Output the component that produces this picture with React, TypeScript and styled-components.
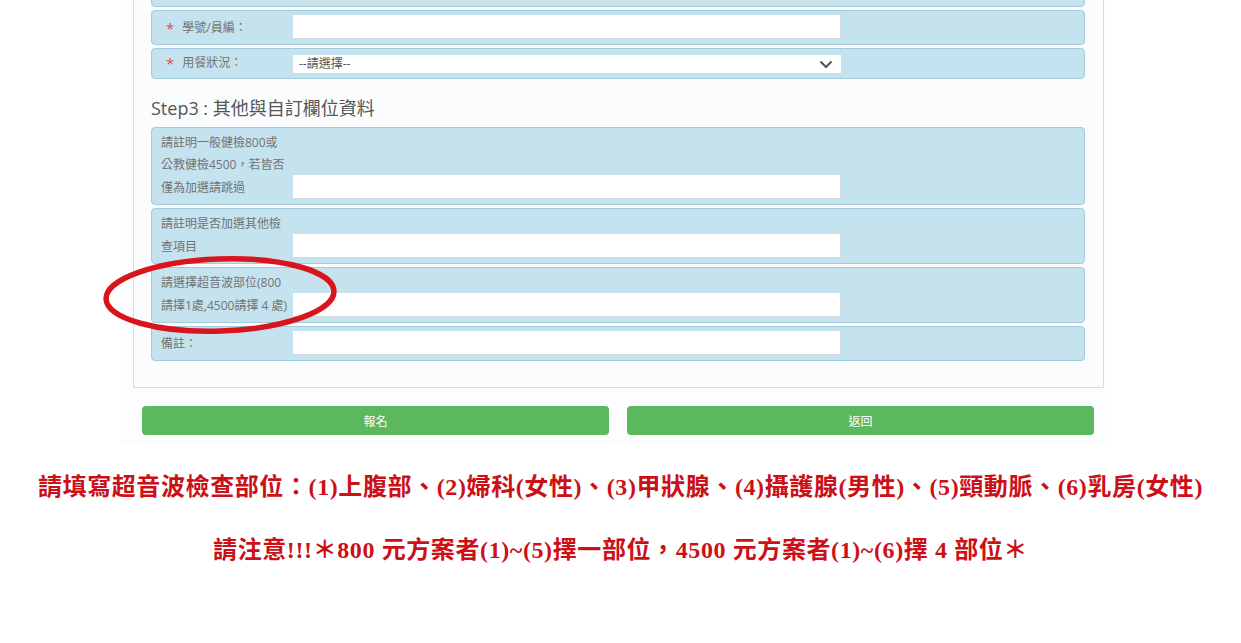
import React from 'react';
import styled, { createGlobalStyle } from 'styled-components';

const GlobalStyle = createGlobalStyle`
    body {
        margin: 0;
        background: #ffffff;
        font-family: "Open Sans", "Noto Sans CJK TC", sans-serif;
    }
`;

interface IField {
    label: string[];
    required?: boolean;
    select?: boolean;
}

// the first row of step 2 is scrolled off the top; only its lower edge shows
const stepTwo: IField[] = [
    { label: [] },
    { label: ['學號/員編：'], required: true },
    { label: ['用餐狀況：'], required: true, select: true },
];

const stepThree: IField[] = [
    { label: ['請註明一般健檢800或', '公教健檢4500，若皆否', '僅為加選請跳過'] },
    { label: ['請註明是否加選其他檢', '查項目'] },
    { label: ['請選擇超音波部位(800', '請擇1處,4500請擇 4 處)'] },
    { label: ['備註：'] },
];

const FieldRow = ({ label, required, select }: IField) => (
    <Row $compact={select}>
        <Label>
            {required && <Star>*</Star>}
            <LabelText>
                {label.map(line => (
                    <span key={line}>{line}</span>
                ))}
            </LabelText>
        </Label>
        {select ? (
            <SelectWrap>
                <Select defaultValue="">
                    <option value="">--請選擇--</option>
                </Select>
                <Chevron width="14" height="9" viewBox="0 0 14 9">
                    <polyline points="1.5,1.5 7,7 12.5,1.5" />
                </Chevron>
            </SelectWrap>
        ) : (
            <Input type="text" />
        )}
    </Row>
);

const App = () => {
    return (
        <Page>
            <GlobalStyle />
            <FormArea>
                <Panel>
                    {stepTwo.map((f, i) => (
                        <FieldRow key={i} {...f} />
                    ))}
                    <StepTitle>Step3 : 其他與自訂欄位資料</StepTitle>
                    {stepThree.map(f => (
                        <FieldRow key={f.label[0]} {...f} />
                    ))}
                </Panel>
                <ButtonBar>
                    <Button type="button">報名</Button>
                    <Button type="button">返回</Button>
                </ButtonBar>
            </FormArea>
            <Notice>
                <p>請填寫超音波檢查部位：(1)上腹部、(2)婦科(女性)、(3)甲狀腺、(4)攝護腺(男性)、(5)頸動脈、(6)乳房(女性)</p>
                <p>請注意!!!＊800 元方案者(1)~(5)擇一部位，4500 元方案者(1)~(6)擇 4 部位＊</p>
            </Notice>
            <Circle width="244" height="88" viewBox="0 0 244 88">
                <ellipse cx="122" cy="44" rx="114" ry="36" transform="rotate(-2 122 44)" />
            </Circle>
        </Page>
    );
};

const Page = styled.div`
    display: flow-root;
    position: relative;
    min-height: 643px;
`;

const FormArea = styled.div`
    width: 990px;
    margin: -39px 0 0 120px;
    background: #fcfdfe;
`;

const Panel = styled.div`
    width: 971px;
    margin-left: 13px;
    box-sizing: border-box;
    padding: 10px 18px 26px 17px;
    background: #fbfcfd;
    border: 1px solid #d9dcdf;
`;

const Row = styled.div<{ $compact?: boolean }>`
    display: flex;
    align-items: flex-end;
    box-sizing: border-box;
    width: 934px;
    margin-bottom: 3px;
    padding: ${props => (props.$compact ? '3px 9px' : '4px 9px 5px')};
    background: #c5e2ef;
    border: 1px solid #a2cbdd;
    border-radius: 4px;

    &:last-child {
        margin-bottom: 0;
    }
`;

const Label = styled.div`
    display: flex;
    flex-shrink: 0;
    width: 132px;
    font-size: 12px;
    line-height: 22.5px;
    color: #737373;
`;

const Star = styled.span`
    margin: 0 8px 0 5px;
    font-size: 15px;
    color: #d9534f;
`;

const LabelText = styled.div`
    display: flex;
    flex-direction: column;
    white-space: nowrap;
`;

const Input = styled.input`
    box-sizing: border-box;
    width: 548px;
    height: 24px;
    margin: 0;
    background: #ffffff;
    border: 1px solid #d3dadd;
    border-width: 0 1px 1px 0;
`;

const SelectWrap = styled.div`
    position: relative;
    align-self: flex-start;
    width: 548px;
    height: 18px;
    margin-top: 3px;
`;

const Select = styled.select`
    appearance: none;
    display: block;
    box-sizing: border-box;
    width: 100%;
    height: 18px;
    margin: 0;
    padding: 0 0 0 6px;
    background: #ffffff;
    border: none;
    font-family: "Open Sans", "Noto Sans CJK TC", sans-serif;
    font-size: 12px;
    line-height: 18px;
    color: #555555;
`;

const Chevron = styled.svg`
    position: absolute;
    right: 8px;
    top: 5px;
    fill: none;
    stroke: #555555;
    stroke-width: 2;
`;

const StepTitle = styled.h3`
    margin: 16px 0 6px;
    font-size: 18px;
    font-weight: 400;
    line-height: 26px;
    color: #555555;
`;

const ButtonBar = styled.div`
    display: flex;
    gap: 18px;
    padding: 18px 16px 9px 22px;
`;

const Button = styled.button`
    flex: 1;
    height: 29px;
    margin: 0;
    background: #5cb85c;
    border: none;
    border-radius: 4px;
    font-family: "Open Sans", "Noto Sans CJK TC", sans-serif;
    font-size: 12px;
    color: #ffffff;
`;

const Notice = styled.div`
    margin-top: 27px;
    text-align: center;
    font-family: "Liberation Serif", "Noto Sans CJK TC", serif;
    font-size: 24px;
    font-weight: 700;
    line-height: 32px;
    letter-spacing: 0.6px;
    color: #cc1018;

    p {
        margin: 0 0 31px;
    }
`;

const Circle = styled.svg`
    position: absolute;
    left: 98px;
    top: 251px;
    fill: none;
    stroke: #d9141c;
    stroke-width: 5.5;
`;

export default App;
